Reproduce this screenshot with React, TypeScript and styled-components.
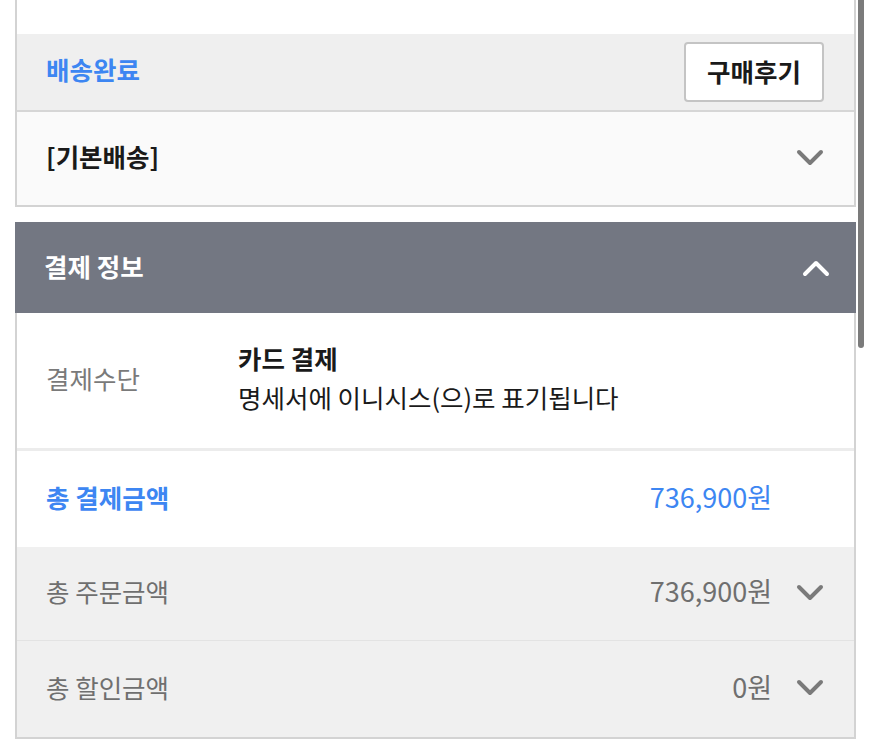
import React from 'react';
import styled, { createGlobalStyle } from 'styled-components';

const GlobalStyle = createGlobalStyle`
  html, body {
    margin: 0;
    padding: 0;
    background: #ffffff;
    font-family: "Noto Sans CJK KR", "Noto Sans", sans-serif;
    overflow: hidden;
  }
`;

const Page = styled.div`
  padding: 0 15px;
  width: 871px;
  box-sizing: border-box;
`;

const Card = styled.section<{ $top?: boolean }>`
  border: 2px solid #d3d3d3;
  border-top: ${(p) => (p.$top ? 'none' : '2px solid #d3d3d3')};
  margin-bottom: ${(p) => (p.$top ? '15px' : '0')};
  background: #ffffff;
`;

const Blank = styled.div`
  height: 34px;
  background: #ffffff;
`;

const StatusRow = styled.div`
  height: 76px;
  background: #efefef;
  border-bottom: 2px solid #d6d6d6;
  display: flex;
  align-items: center;
  justify-content: space-between;
  padding: 0 30px 0 29px;
`;

const StatusText = styled.span`
  color: #3d86f2;
  font-size: 25.5px;
  font-weight: 700;
  margin-top: -7px;
`;

const ReviewButton = styled.button`
  width: 140px;
  height: 60px;
  background: #ffffff;
  border: 2px solid #c4c4c4;
  border-radius: 4px;
  font-family: inherit;
  font-size: 25.5px;
  font-weight: 700;
  color: #1a1a1a;
  padding: 0 0 3px;
`;

const Row = styled.div<{ $h: number; $bg: string; $line?: string }>`
  height: ${(p) => p.$h}px;
  background: ${(p) => p.$bg};
  border-bottom: ${(p) => (p.$line ? p.$line : 'none')};
  display: flex;
  align-items: center;
  padding: 0 30px 6px 29px;
  box-sizing: border-box;
`;

const Label = styled.span<{ $color: string; $bold?: boolean }>`
  color: ${(p) => p.$color};
  font-size: 25.5px;
  font-weight: ${(p) => (p.$bold ? 700 : 400)};
  flex: 1;
`;

const Header = styled.div`
  height: 91px;
  background: #737782;
  display: flex;
  align-items: center;
  justify-content: space-between;
  padding: 0 26px 0 29px;
  margin: -2px -2px 0;
`;

const HeaderTitle = styled.span`
  color: #ffffff;
  font-size: 25.5px;
  font-weight: 700;
  margin-top: -5px;
`;

const MethodRow = styled.div`
  height: 135px;
  display: flex;
  align-items: center;
  padding: 0 30px 0 29px;
  border-bottom: 3px solid #ececec;
`;

const MethodLabel = styled.span`
  width: 192px;
  color: #7a7a7a;
  font-size: 25.5px;
  padding-bottom: 6px;
`;

const MethodValue = styled.div`
  display: flex;
  flex-direction: column;
  font-size: 25.5px;
  line-height: 39px;
  color: #1a1a1a;
  margin-top: -8px;
`;

const MethodName = styled.span`
  font-weight: 700;
`;

const Amount = styled.span<{ $color: string }>`
  color: ${(p) => p.$color};
  font-size: 27px;
`;

const ChevronSlot = styled.span`
  width: 28px;
  margin-left: 24px;
  margin-top: 4px;
  display: flex;
  align-items: center;
  justify-content: center;
`;

const ScrollThumb = styled.div`
  position: fixed;
  top: -10px;
  left: 858px;
  width: 6px;
  height: 358px;
  border-radius: 3px;
  background: #7b7b7b;
`;

const Chevron = ({ up, color }: { up?: boolean; color: string }) => (
  <svg width="28" height="18" viewBox="0 0 28 18">
    <path
      d={up ? 'M3 15 L14 4 L25 15' : 'M3 3 L14 14 L25 3'}
      fill="none"
      stroke={color}
      strokeWidth="4"
      strokeLinecap="round"
      strokeLinejoin="round"
    />
  </svg>
);

type Sum = { label: string; amount: string; bg: string; color: string; bold?: boolean; chevron: boolean; line?: string; h: number };

const sums: Sum[] = [
  { label: '총 결제금액', amount: '736,900원', bg: '#ffffff', color: '#3d86f2', bold: true, chevron: false, h: 96 },
  { label: '총 주문금액', amount: '736,900원', bg: '#f0f0f0', color: '#6f6f6f', chevron: true, line: '1px solid #e3e3e3', h: 94 },
  { label: '총 할인금액', amount: '0원', bg: '#f0f0f0', color: '#6f6f6f', chevron: true, h: 96 },
];

export default function App() {
  return (
    <>
      <GlobalStyle />
      <Page>
        <Card $top>
          <Blank />
          <StatusRow>
            <StatusText>배송완료</StatusText>
            <ReviewButton>구매후기</ReviewButton>
          </StatusRow>
          <Row $h={93} $bg="#fafafa">
            <Label $color="#1a1a1a" $bold>
              [기본배송]
            </Label>
            <ChevronSlot>
              <Chevron color="#7a7a7a" />
            </ChevronSlot>
          </Row>
        </Card>
        <Card>
          <Header>
            <HeaderTitle>결제 정보</HeaderTitle>
            <Chevron up color="#ffffff" />
          </Header>
          <MethodRow>
            <MethodLabel>결제수단</MethodLabel>
            <MethodValue>
              <MethodName>카드 결제</MethodName>
              <span>명세서에 이니시스(으)로 표기됩니다</span>
            </MethodValue>
          </MethodRow>
          {sums.map((s) => (
            <Row key={s.label} $h={s.h} $bg={s.bg} $line={s.line}>
              <Label $color={s.color} $bold={s.bold}>
                {s.label}
              </Label>
              <Amount $color={s.color}>{s.amount}</Amount>
              <ChevronSlot>{s.chevron && <Chevron color="#7a7a7a" />}</ChevronSlot>
            </Row>
          ))}
        </Card>
      </Page>
      <ScrollThumb />
    </>
  );
}
